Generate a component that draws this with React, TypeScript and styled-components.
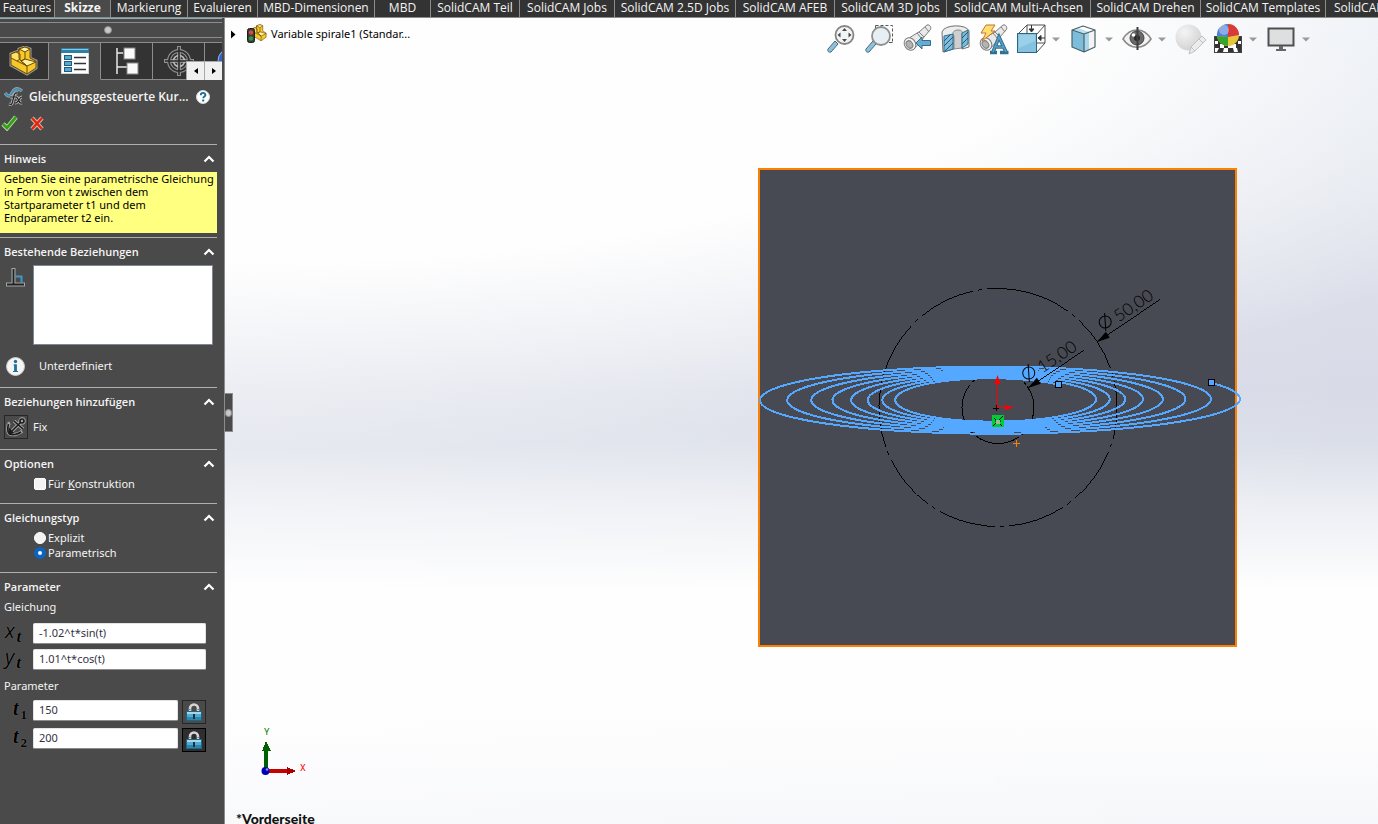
import React, { useState } from "react";
import styled, { createGlobalStyle, css } from "styled-components";

const GlobalStyle = createGlobalStyle`
  * { box-sizing: border-box; }
  body { margin: 0; background: #4a4a4a; }
  button, input, textarea { font: inherit; color: inherit; }
  button { padding: 0; border: 0; background: none; cursor: pointer; }
  fieldset { margin: 0; padding: 0; border: 0; }
  h1, h2, h3, p { margin: 0; }
  svg { display: block; flex: none; }
`;

const Page = styled.div`
  display: flex;
  flex-direction: column;
  height: 100vh;
  overflow: hidden;
  font-family: "Noto Sans", "Open Sans", sans-serif;
  font-size: 11px;
  line-height: 14px;
  color: #f4f4f4;
`;

/* ---------- ribbon ---------- */

const Ribbon = styled.nav`
  display: flex;
  flex: none;
  height: 18px;
  background: #333;
  border-bottom: 1px solid #8c8c8c;
`;

const RibbonTab = styled.button<{ $width: number; $active?: boolean }>`
  display: flex;
  flex: none;
  align-items: flex-start;
  justify-content: center;
  width: ${(p) => p.$width}px;
  border-right: 1px solid #8c8c8c;
  background: ${(p) => (p.$active ? "#4a4a4a" : "#333")};
  font-family: "Open Sans", sans-serif;
  font-size: 12px;
  line-height: 16px;
  font-weight: ${(p) => (p.$active ? 700 : 400)};
  white-space: nowrap;
`;

const tabs: [string, number][] = [
  ["Features", 55],
  ["Skizze", 56],
  ["Markierung", 77],
  ["Evaluieren", 70],
  ["MBD-Dimensionen", 117],
  ["MBD", 56],
  ["SolidCAM Teil", 89],
  ["SolidCAM Jobs", 95],
  ["SolidCAM 2.5D Jobs", 121],
  ["SolidCAM AFEB", 99],
  ["SolidCAM 3D Jobs", 112],
  ["SolidCAM Multi-Achsen", 144],
  ["SolidCAM Drehen", 110],
  ["SolidCAM Templates", 125],
  ["SolidCAM", 70],
];

/* ---------- property manager ---------- */

const Body = styled.div`
  display: flex;
  flex: 1;
  min-height: 0;
`;

const Sidebar = styled.aside`
  flex: none;
  width: 225px;
  background: #4a4a4a;
  border-right: 1px solid #8c8c8c;
`;

const GripBar = styled.div`
  display: flex;
  align-items: center;
  justify-content: center;
  width: 222px;
  height: 20px;
  padding-top: 3px;
  padding-right: 6px;
  border-top: 1px solid #8fb0b0;
  border-bottom: 1px solid #8c8c8c;
  background: linear-gradient(#8c8c8c, #8c8c8c) 0 3px / 100% 1px no-repeat;
`;

const GripDot = styled.span`
  width: 8px;
  height: 8px;
  border-radius: 50%;
  background: #c8c8c8;
  border: 1px solid #8c8c8c;
`;

const PanelTabs = styled.div`
  position: relative;
  display: flex;
  width: 222px;
  height: 38px;
  margin-top: 4px;
  overflow: hidden;
  border-top: 1px solid #8c8c8c;
`;

const PanelTab = styled.button<{ $active?: boolean }>`
  display: flex;
  flex: none;
  align-items: center;
  justify-content: center;
  width: 52px;
  border-right: 1px solid #8c8c8c;
  border-bottom: 1px solid ${(p) => (p.$active ? "#4a4a4a" : "#8c8c8c")};
  background: ${(p) => (p.$active ? "#4a4a4a" : "#333")};
  &:first-child { width: 49px; }
`;

const TabScroller = styled.div`
  position: absolute;
  right: 0;
  bottom: 0;
  display: flex;
  gap: 1px;
  width: 36px;
  height: 19px;
  padding: 1px 0 0 1px;
  background: #a8a8a8;
`;

const ScrollButton = styled.button`
  display: flex;
  flex: 1;
  align-items: center;
  justify-content: center;
  background: #f0f0f0;
`;

const TitleRow = styled.header`
  display: flex;
  align-items: center;
  height: 33px;
  padding: 0 14px 0 4px;
`;

const Title = styled.h1`
  flex: 1;
  min-width: 0;
  padding-left: 4px;
  font-size: 12px;
  line-height: 16px;
  font-weight: 600;
  font-family: "Open Sans", sans-serif;
  white-space: nowrap;
`;

const Confirm = styled.div`
  display: flex;
  align-items: center;
  gap: 10px;
  height: 31px;
  padding: 0 0 12px 1px;
`;

const Section = styled.section<{ $bottom: number }>`
  width: 217px;
  padding-bottom: ${(p) => p.$bottom}px;
  border-top: 1px solid #b0b0b0;
`;

const SectionHeader = styled.button`
  display: flex;
  align-items: center;
  justify-content: space-between;
  width: 100%;
  height: 27px;
  padding: 1px 2px 0 4px;
  text-align: left;
`;

const SectionTitle = styled.h2`
  font-size: 11px;
  line-height: 14px;
  font-weight: 600;
  font-family: "Open Sans", sans-serif;
`;

const Hint = styled.p`
  height: 61px;
  padding-left: 4px;
  background: #ffff80;
  color: #000;
  line-height: 13px;
`;

const RelationsRow = styled.div`
  display: flex;
  gap: 7px;
  padding: 0 4px 0 5px;
`;

const RelationList = styled.textarea`
  flex: 1;
  min-width: 0;
  height: 80px;
  resize: none;
  border: 1px solid #7f8697;
  background: #fff;
  outline: none;
`;

const StatusRow = styled.div`
  display: flex;
  align-items: center;
  gap: 14px;
  height: 22px;
  margin-top: 10px;
  padding-left: 6px;
`;

const FixRow = styled.label`
  display: flex;
  align-items: center;
  gap: 5px;
  padding-left: 4px;
`;

const ToolButton = styled.button<{ $pressed?: boolean }>`
  display: flex;
  flex: none;
  align-items: center;
  justify-content: center;
  width: 24px;
  height: 24px;
  border: 1px solid ${(p) => (p.$pressed ? "#000" : "#262626")};
  background: ${(p) => (p.$pressed ? "#2e2e2e" : "#4a4a4a")};
`;

const Choices = styled.fieldset`
  display: grid;
  gap: 2px;
`;

const ChoiceRow = styled.label`
  display: flex;
  align-items: center;
  gap: 2px;
  height: 13px;
  padding-left: 34px;
`;

const choice = css`
  appearance: none;
  flex: none;
  width: 12px;
  height: 12px;
  margin: 0;
  background: #f3f3f3;
  border: 1px solid #fff;
`;

const Check = styled.input`
  ${choice}
  border-radius: 2px;
  &:checked { background: #0a64c2; }
`;

const Radio = styled.input`
  ${choice}
  border-radius: 50%;
  &:checked { background: #fff; border: 4px solid #0a64c2; }
`;

const GroupLabel = styled.h3`
  height: 14px;
  padding-left: 4px;
  font-size: 11px;
  line-height: 14px;
  font-weight: 400;
`;

const Fields = styled.div<{ $gap: number; $top: number; $bottom: number }>`
  display: grid;
  grid-template-columns: minmax(0, 1fr);
  gap: ${(p) => p.$gap}px;
  padding: ${(p) => p.$top}px 11px ${(p) => p.$bottom}px 0;
`;

const Field = styled.div`
  display: flex;
  align-items: flex-start;
`;

const Symbol = styled.label<{ $serif?: boolean }>`
  flex: none;
  width: 33px;
  height: 20px;
  padding-left: ${(p) => (p.$serif ? 13 : 5)}px;
  font-family: ${(p) => (p.$serif ? '"Liberation Serif", serif' : '"Open Sans", sans-serif')};
  font-size: 20px;
  line-height: 16px;
  font-style: italic;
  font-weight: ${(p) => (p.$serif ? 700 : 500)};
  color: #000;
  white-space: nowrap;
  text-shadow: 0 0 1px #8a8a8a;
  sub {
    padding-left: 2px;
    font: ${(p) => (p.$serif ? "normal 700 13px" : "italic 700 17px")} / 12px "Liberation Serif", serif;
    vertical-align: -4px;
  }
`;

const TextBox = styled.input`
  flex: 1;
  min-width: 0;
  height: 21px;
  padding: 0 5px 2px;
  border: 1px solid #e4e4e4;
  border-bottom-color: #8c8c8c;
  border-radius: 2px;
  background: #fff;
  color: #33333f;
  outline: none;
`;

const LockSlot = styled.div`
  flex: none;
  padding-left: 4px;
`;

/* ---------- graphics area ---------- */

const Viewport = styled.main`
  position: relative;
  flex: 1;
  min-width: 0;
  overflow: hidden;
  color: #000;
  background:
    radial-gradient(ellipse 130% 54% at 0 0, #fefefe 56%, rgba(254, 254, 254, 0.55) 75%, rgba(254, 254, 254, 0) 100%),
    linear-gradient(90deg, rgba(255, 255, 255, 0.3), rgba(255, 255, 255, 0)),
    linear-gradient(#e2e8f1 0%, #dfe3ec 22%, #d8dbe7 46%, #dbdfe9 53%, #edeff4 61%, #fefefe 71%, #fefefe 86%, #f6f7fa 100%);
`;

const SplitHandle = styled.button`
  position: absolute;
  left: 0;
  top: 375px;
  z-index: 2;
  display: flex;
  align-items: center;
  width: 8px;
  height: 39px;
  background: #4a4a4a;
  border: 1px solid #8c8c8c;
  border-left: 0;
`;

const ViewportHeader = styled.div`
  position: relative;
  z-index: 1;
  display: flex;
  align-items: flex-start;
  justify-content: space-between;
  padding: 6px 68px 0 6px;
`;

const TreeItem = styled.button`
  display: flex;
  align-items: center;
  height: 20px;
  font-size: 11px;
  white-space: nowrap;
  span { padding-left: 4px; }
`;

const TreeGlyph = styled.i`
  padding-left: 11px;
`;

const ViewTools = styled.div`
  display: flex;
  gap: 10px;
`;

const ToolGroup = styled.div`
  display: flex;
  align-items: center;
  gap: 7px;
`;

const IconButton = styled.button`
  width: 28px;
  height: 30px;
`;

const Scene = styled.svg`
  position: absolute;
  left: 0;
  top: 0;
`;

/* ---------- icons ---------- */

const Chevron = () => (
  <svg width="12" height="8" viewBox="0 0 12 8">
    <path d="M1.500 6.500 6 2l4.500 4.500" fill="none" stroke="#fff" strokeWidth="2.200" />
  </svg>
);

const PartShape = () => (
  <g stroke="#6b4a00" strokeWidth="1" strokeLinejoin="round">
    <path d="M2 8 10 5V3l6-2 5 2v9l6 3v7l-9 6L2 19Z" fill="#f7c82c" />
    <path d="m10 3 6-2 5 2-5 3Z" fill="#fff0a0" />
    <path d="m2 8 5-2 4 2v5l-3 2-6-3Z" fill="#ffe16a" />
    <path d="m12 15 4-2 11 3-9 4Z" fill="#fff0a0" />
    <path d="M10 3v9l2 3 6 5v8M16 6v7l-4 2M18 20 8 15" fill="none" />
  </g>
);

const PartIcon = () => (
  <svg width="30" height="30" viewBox="0 0 30 30">
    <path d="M2 8 10 5V3l6-2 5 2v9l6 3v7l-9 6L2 19Z" fill="none" stroke="#9a9a9a" strokeWidth="3" />
    <PartShape />
  </svg>
);

const PropertyIcon = () => (
  <svg width="28" height="28" viewBox="0 0 28 28">
    <rect x="0.500" y="1.500" width="27" height="25" fill="#fff" stroke="#cfd6da" />
    <path d="M0 1h28v5H0Z" fill="#2e7fa6" />
    <path d="M1 2h26v1H1Z" fill="#8cc6e0" />
    <g fill="#5aa8cc" stroke="#1d5c7d">
      <rect x="3.500" y="8.500" width="7" height="4" />
      <rect x="3.500" y="14.500" width="7" height="4" />
      <rect x="3.500" y="20.500" width="7" height="4" />
    </g>
    <path d="M13 10.500h12M13 16.500h12M13 22.500h12" stroke="#333" strokeWidth="1.400" />
  </svg>
);

const ConfigIcon = () => (
  <svg width="24" height="28" viewBox="0 0 24 28">
    <path d="M2 1v26M2 6h6M2 20h10" stroke="#e8e8e8" strokeWidth="1.500" fill="none" />
    <rect x="9" y="1" width="11" height="11" fill="#fafafa" stroke="#888" />
    <rect x="12" y="16" width="11" height="11" fill="#fafafa" stroke="#888" />
  </svg>
);

const TargetIcon = () => (
  <svg width="30" height="30" viewBox="0 0 30 30" fill="none">
    <g stroke="#8f8f8f" strokeWidth="4">
      <circle cx="15" cy="15" r="10" />
      <path d="M15 0v30M0 15h30" />
    </g>
    <g stroke="#2b2b2b" strokeWidth="1.600">
      <circle cx="15" cy="15" r="10" />
      <circle cx="15" cy="15" r="5.500" stroke="#bbb" />
      <path d="M15 1v28M1 15h28" />
    </g>
  </svg>
);

const BallIcon = () => (
  <svg width="28" height="28" viewBox="0 0 28 28">
    <circle cx="14" cy="14" r="13" fill="#2f62c4" stroke="#9ab4e6" />
  </svg>
);

const CurveIcon = () => (
  <svg width="21" height="20" viewBox="0 0 21 20">
    <path d="M1 6c3 4 5 4 7 0s5-6 10-2" fill="none" stroke="#9aa3a8" strokeWidth="3.500" />
    <path d="M1 6c3 4 5 4 7 0s5-6 10-2" fill="none" stroke="#3c8fb8" strokeWidth="1.800" />
    <path d="M14 6c-4-1-4 3-5 7s-1 5-4 4M6 10h7M12 10c3 0 2 7 6 6M18 10c-3 0-3 6-7 6" fill="none" stroke="#b5b5b5" strokeWidth="3" />
    <path d="M14 6c-4-1-4 3-5 7s-1 5-4 4M6 10h7M12 10c3 0 2 7 6 6M18 10c-3 0-3 6-7 6" fill="none" stroke="#222" strokeWidth="1.200" />
  </svg>
);

const HelpIcon = () => (
  <svg width="14" height="14" viewBox="0 0 14 14">
    <circle cx="7" cy="7" r="6.500" fill="#fff" stroke="#cfd8dc" />
    <path d="M4.800 5.200c0-3 4.600-3 4.600-.3 0 1.600-2.200 1.600-2.200 3.400" fill="none" stroke="#1d6b90" strokeWidth="1.900" />
    <rect x="6.200" y="9.500" width="2" height="2" fill="#1d6b90" />
  </svg>
);

const OkIcon = () => (
  <svg width="18" height="16" viewBox="0 0 18 16">
    <path d="m2 9 4 4L15 2" fill="none" stroke="#b9d8ae" strokeWidth="4.600" />
    <path d="m2 9 4 4L15 2" fill="none" stroke="#35a012" strokeWidth="2.800" />
  </svg>
);

const CancelIcon = () => (
  <svg width="16" height="16" viewBox="0 0 16 16">
    <path d="m3 3 10 11M13 3 3 14" stroke="#d9b5ac" strokeWidth="4.400" />
    <path d="m3 3 10 11M13 3 3 14" stroke="#e02810" strokeWidth="2.600" />
  </svg>
);

const PerpIcon = () => (
  <svg width="21" height="22" viewBox="0 0 21 22">
    <path d="M8.500 3v15M1 19.500h19" stroke="#a6a6a6" strokeWidth="4" />
    <path d="M10 11.500h6.500V18" fill="none" stroke="#3f98c4" strokeWidth="2" />
    <path d="M8.500 4v15M2 19.500h17" stroke="#222" strokeWidth="1.800" />
  </svg>
);

const InfoIcon = () => (
  <svg width="19" height="19" viewBox="0 0 19 19">
    <circle cx="9.500" cy="9.500" r="9" fill="#f5f5f5" stroke="#c9c9c9" />
    <path d="M9.500 7.500V15" fill="none" stroke="#1f7098" strokeWidth="2.800" />
    <path d="M7.500 8h3M7 14.500h5" fill="none" stroke="#1f7098" />
    <circle cx="9.500" cy="4.500" r="1.700" fill="#1f7098" />
  </svg>
);

const AnchorIcon = () => (
  <svg width="20" height="20" viewBox="0 0 20 20" fill="none">
    <g stroke="#a5a5a5" strokeWidth="3.400">
      <circle cx="16" cy="4" r="2" />
      <path d="M14.500 5.500 5 15M8 4l9 8M2.500 7C1 13 2 16 4 17s7 1 11-2M2 7l2-1M15 15l1-1" />
    </g>
    <g stroke="#1c1c1c" strokeWidth="1.600">
      <circle cx="16" cy="4" r="2" />
      <path d="M14.500 5.500 5 15M8 4l9 8M2.500 7C1 13 2 16 4 17s7 1 11-2" />
    </g>
    <path d="M2.500 10 8 16l-5 2Z" fill="#1c1c1c" />
  </svg>
);

const LockIcon = () => (
  <svg width="18" height="20" viewBox="0 0 18 20">
    <path d="M5 10V6.500a4 4 0 0 1 8 0V10" fill="none" stroke="#d5d5d5" strokeWidth="2.600" />
    <path d="M4 7.500h1.500M12.500 7.500H14" stroke="#777" />
    <rect x="1.500" y="9.500" width="15" height="9" fill="#56a9cd" stroke="#1d6587" />
    <path d="M2 10h14v2H2Z" fill="#a5d7ea" />
    <path d="M2 15h14v3H2Z" fill="#2c86ae" />
    <rect x="8" y="12" width="2" height="5" fill="#0d3447" />
  </svg>
);

const ExpandIcon = () => (
  <svg width="5" height="9" viewBox="0 0 5 9">
    <path d="M0 0.500 4.500 4.500 0 8.500Z" fill="#000" />
  </svg>
);

const TreePartIcon = () => (
  <svg width="20" height="20" viewBox="0 0 20 20">
    <g transform="translate(4 0) scale(.56 .6)">
      <PartShape />
    </g>
    <rect x="0.500" y="4.500" width="7" height="14" rx="2" fill="#3a3a3a" stroke="#1c1c1c" />
    <circle cx="4" cy="8.500" r="2.200" fill="#e04848" />
    <circle cx="4" cy="14.500" r="2.200" fill="#2c9c3c" />
  </svg>
);

const DropArrow = () => (
  <svg width="8" height="5" viewBox="0 0 8 5">
    <path d="M0 0.500h8l-4 4Z" fill="#9a9a9e" />
  </svg>
);

const Handle = () => (
  <path d="m1 25 7-8 3 3-7 8c-2 1-4-1-3-3Z" fill="#8fc1dc" stroke="#43687c" />
);

const Tube = () => (
  <g stroke="#7d7d7d" strokeLinejoin="round">
    <path d="M3 16 14 9l2-1 8-7c3-1 5 3 3 5l-6 7-2 3-9 10Z" fill="#e9e9e9" />
    <path d="m14 9 5 6M16 8l5 5M22 3l4 5" fill="none" />
    <ellipse cx="7" cy="20" rx="5.500" ry="6.500" transform="rotate(-35 7 20)" fill="#f4f4f4" />
    <ellipse cx="6.500" cy="20.500" rx="3" ry="4" transform="rotate(-35 6.500 20.500)" fill="#b4b4b4" />
  </g>
);

const art: Record<string, React.ReactNode> = {
  fit: (
    <>
      <Handle />
      <circle cx="17.500" cy="11" r="9" fill="#f2f5f6" stroke="#858585" strokeWidth="1.800" />
      <path d="m17.500 4 2.500 3h-5ZM17.500 18l2.500-3h-5ZM10.500 11l3-2.500v5ZM24.500 11l-3-2.500v5Z" fill="#4a4a4a" />
    </>
  ),
  area: (
    <>
      <path d="M10.500 1.500h17v17" fill="none" stroke="#555" strokeDasharray="3 2" />
      <path d="M10.500 1.500V5M27.500 18.500H24" stroke="#555" />
      <Handle />
      <circle cx="16" cy="12" r="9" fill="#e6eff3" stroke="#909090" strokeWidth="1.800" />
    </>
  ),
  previous: (
    <>
      <Tube />
      <path d="m13 19 6-6v3.500h8.500v5H19V25Z" fill="#68add0" stroke="#2f6f92" />
    </>
  ),
  section: (
    <>
      <path d="M1 8C3 0 26 0 28 7v16l-7 2V12h-8v13L2 28Z" fill="#ededed" stroke="#707070" />
      <path d="M13 12c-3-4 1-6 4-6s5 1 4 4v14l-8 1Z" fill="#cfcfcf" stroke="#8a8a8a" />
      <path d="m3 12 9-2v15l-9 3ZM21 9l6-3v14l-6 4Z" fill="#7fbcdb" stroke="#2f6f92" />
      <path d="m3 17 6-6M3 22l9-9M4 27l8-8M21 14l6-6M21 20l6-6" stroke="#25566f" />
    </>
  ),
  annotate: (
    <>
      <Tube />
      <path d="M7 1h9l-4 6h4L3 17l4-8H2Z" fill="#ffdf70" stroke="#c5722a" />
      <path d="M11 28.500h7M21 28.500h8.500M14 28l6-15 7 15M17 23h8" fill="none" stroke="#2f6f92" strokeWidth="3.600" />
      <path d="M14 28l6-15 7 15M17 23h8" fill="none" stroke="#5a9fc4" strokeWidth="1.600" />
    </>
  ),
  orient: (
    <>
      <path d="m1 10 9-9h18v18l-8 9M28 1l-8 9M10 1v9M20 19h8" fill="none" stroke="#4f4f4f" />
      <path d="M14.500 1v6M12 5l2.500 3L17 5ZM28 14h-6M24 11.500 21 14l3 2.500Z" stroke="#333" fill="#333" />
      <rect x="0.500" y="9.500" width="19" height="19" fill="#84c2e0" stroke="#2c6684" />
      <path d="M2 11h16v6L2 24Z" fill="#a9d8ec" opacity=".6" />
    </>
  ),
  display: (
    <>
      <path d="m2 6 11-4 12 4v17l-11 5-12-5Z" fill="#fff" />
      <path d="m2 6 12 4v18L2 23Z" fill="#7dbddc" />
      <path d="m14 10 5-2v18l-5 2Z" fill="#a9d6ea" />
      <path d="m19 8 6-2v17l-6 3Z" fill="#f4f4f4" />
      <path d="m2 6 6-2 11 4-5 2Z" fill="#b8e0f0" />
      <path d="m2 6 11-4 12 4v17l-11 5-12-5ZM2 6l12 4 11-4M14 10v18" fill="none" stroke="#4d5f68" strokeWidth="1.200" strokeLinejoin="round" />
    </>
  ),
  hide: (
    <>
      <path d="M0 15C7 3 21 3 28 15 21 26 7 26 0 15Z" fill="#f3f3f3" stroke="#8a8a8a" strokeWidth="1.600" />
      <circle cx="14" cy="14" r="7" fill="#6a6a6a" stroke="#444" />
      <circle cx="14" cy="14" r="3" fill="#262626" />
      <circle cx="10.500" cy="11" r="1.800" fill="#fff" />
      <path d="M14.500 3v23" stroke="#3f3f3f" strokeWidth="2" />
    </>
  ),
  appearance: (
    <>
      <circle cx="12.500" cy="13.500" r="13" fill="url(#paleBall)" />
      <path d="m13 30 2-7L26 12l4 4-11 11Z" fill="#ececec" stroke="#c2c2c2" />
      <path d="m15 23 4 4M23 15l4 4" stroke="#c2c2c2" />
    </>
  ),
  scene: (
    <>
      <rect x="0.500" y="12.500" width="27" height="16" fill="#fff" stroke="#444" />
      <path d="M1 13h4v4H1ZM23 13h4v4h-4ZM4 17h4v3H4ZM20 17h4v3h-4ZM1 20h5v4H1ZM22 20h5v4h-5ZM10 20h4v4h-4ZM5 24h5l-1 4H3ZM14 24h5l1 4h-6ZM23 24h4v4h-3Z" fill="#333" />
      <circle cx="14" cy="11" r="11" fill="#eac53b" />
      <path d="M14 0A11 11 0 0 0 3 12l11 1Z" fill="#4f7fda" />
      <path d="M14 0a11 11 0 0 1 11 11l-11 2Z" fill="#d83a3a" />
      <path d="M3 12a11 11 0 0 0 11 10v-9Z" fill="#35a52e" />
      <circle cx="10" cy="6" r="5" fill="#fff" opacity=".35" />
    </>
  ),
  monitor: (
    <>
      <path d="M1.500 4.500h25v17h-25Z" fill="#dedfdf" stroke="#505050" strokeWidth="2" />
      <path d="M12 22h4v3h3v2H9v-2h3Z" fill="#666" />
    </>
  ),
};

const viewTools: { id: string; label: string; menu?: boolean }[] = [
  { id: "fit", label: "In Fenster zoomen" },
  { id: "area", label: "Ausschnitt vergrößern" },
  { id: "previous", label: "Vorherige Ansicht" },
  { id: "section", label: "Schnittansicht" },
  { id: "annotate", label: "Dynamische Beschriftungsansichten" },
  { id: "orient", label: "Ansichtsausrichtung", menu: true },
  { id: "display", label: "Anzeigeart", menu: true },
  { id: "hide", label: "Elemente ausblenden", menu: true },
  { id: "appearance", label: "Erscheinungsbild bearbeiten" },
  { id: "scene", label: "Bühne übernehmen", menu: true },
  { id: "monitor", label: "Ansichtseinstellungen", menu: true },
];

/* ---------- model ---------- */

const SCALE = 4.76;
const ORIGIN = { x: 992.5, y: 399.6 };

function spiralPath(from: number, to: number) {
  const points: string[] = [];
  for (let t = from; t <= to + 0.001; t += 0.05) {
    const x = ORIGIN.x - SCALE * Math.pow(1.02, t) * Math.sin(t);
    const y = ORIGIN.y - SCALE * Math.pow(1.01, t) * Math.cos(t);
    points.push(`${x.toFixed(2)} ${y.toFixed(2)}`);
  }
  return "M" + points.join("L");
}

interface DimensionProps {
  x: number;
  y: number;
  text: string;
  inset: number;
  tail: number;
}

const Dimension = ({ x, y, text, inset, tail }: DimensionProps) => (
  <g transform={`translate(${x} ${y}) rotate(-34)`}>
    <path d={`M0 0H${tail}`} stroke="#000" shapeRendering="crispEdges" />
    <path d="M0 0 13-3.500v7Z" fill="#000" />
    <g transform={`translate(${inset} -12) rotate(30)`} fill="none" stroke="#000">
      <circle r="6" />
      <path d="M0-9V9" />
    </g>
    <text x={inset + 11} y="-4" fontFamily="Lato, sans-serif" fontWeight="300" fontSize="17" fill="#000">
      {text}
    </text>
  </g>
);

const Model = ({ from, to }: { from: number; to: number }) => (
  <Scene width="1153" height="806" viewBox="225 18 1153 806">
    <defs>
      <radialGradient id="paleBall" cx="0.350" cy="0.300" r="0.800">
        <stop offset="0" stopColor="#f4f4f4" />
        <stop offset="1" stopColor="#cfcfcf" />
      </radialGradient>
    </defs>
    <rect x="759" y="169" width="477" height="477" fill="#484a53" stroke="#ff8000" strokeWidth="2" shapeRendering="crispEdges" />
    <g fill="none" stroke="#000" shapeRendering="crispEdges">
      <circle cx="998" cy="407.500" r="119" strokeDasharray="58 5 4 5" transform="rotate(-82 998 407.500)" />
      <circle cx="998" cy="407.500" r="36" strokeDasharray="46 4 3 4" transform="rotate(-36 998 407.500)" />
    </g>
    <path d={spiralPath(from, to)} fill="none" stroke="#55a8ff" strokeWidth="2" shapeRendering="crispEdges" />
    <Dimension x={1097} y={342} text="50,00" inset={18} tail={76} />
    <Dimension x={1028} y={388} text="15,00" inset={9} tail={67} />
    <g fill="#55a8ff" stroke="#000" shapeRendering="crispEdges">
      <rect x="1055.500" y="381.500" width="6" height="6" />
      <rect x="1208.500" y="379.500" width="6" height="6" />
    </g>
    <path d="M993 408.500h6M996.500 405v6" stroke="#000" />
    <path d="M997.500 408V382M998 407.500h10" stroke="#f00" />
    <path d="m997.500 375 3 9h-6ZM1014 407.500l-9-2.500v5Z" fill="#f00" />
    <rect x="992" y="415" width="12" height="12" fill="#00cc33" />
    <path d="m993 426 10-10M994 418l8 8M995 421h6" stroke="#000" />
    <rect x="996" y="420" width="4" height="4" fill="#9fb5a5" />
    <path d="M1013 443.500h7M1016.500 440v7" stroke="#ff8000" />
    <g shapeRendering="crispEdges">
      <path d="M264 750h4v20h-4Z" fill="#006000" />
      <path d="m266 741 5 10h-9Z" fill="#006000" />
      <path d="M266 769h22v4h-22Z" fill="#c80000" />
      <path d="m296 771-9-4v8Z" fill="#a80000" />
    </g>
    <circle cx="265.500" cy="771" r="4" fill="#0000b4" />
    <circle cx="267" cy="769.500" r="1.300" fill="#8a8aff" />
    <g fontFamily="Roboto, sans-serif" fontSize="9">
      <text x="264" y="735" fill="#008000">Y</text>
      <text x="300" y="771" fill="#f00">X</text>
    </g>
    <text x="236" y="824" fontFamily="Lato, sans-serif" fontSize="14" fontWeight="900" fill="#111">
      *Vorderseite
    </text>
  </Scene>
);

const Group = ({ title, bottom, children }: { title: string; bottom: number; children: React.ReactNode }) => {
  const [open, setOpen] = useState(true);
  return (
    <Section $bottom={open ? bottom : 0}>
      <SectionHeader aria-expanded={open} onClick={() => setOpen(!open)}>
        <SectionTitle>{title}</SectionTitle>
        <Chevron />
      </SectionHeader>
      {open && children}
    </Section>
  );
};

export default function App() {
  const [active, setActive] = useState("Skizze");
  return (
    <Page>
      <GlobalStyle />
      <Ribbon>
        {tabs.map(([label, width]) => (
          <RibbonTab key={label} $width={width} $active={label === active} onClick={() => setActive(label)}>
            {label}
          </RibbonTab>
        ))}
      </Ribbon>
      <Body>
        <Sidebar>
          <GripBar>
            <GripDot />
          </GripBar>
          <PanelTabs>
            <PanelTab aria-label="FeatureManager"><PartIcon /></PanelTab>
            <PanelTab aria-label="PropertyManager" $active><PropertyIcon /></PanelTab>
            <PanelTab aria-label="ConfigurationManager"><ConfigIcon /></PanelTab>
            <PanelTab aria-label="DimXpertManager"><TargetIcon /></PanelTab>
            <PanelTab aria-label="DisplayManager"><BallIcon /></PanelTab>
            <TabScroller>
              <ScrollButton aria-label="Zurück">
                <svg width="4" height="6" viewBox="0 0 4 6"><path d="M4 0v6L0 3Z" /></svg>
              </ScrollButton>
              <ScrollButton aria-label="Weiter">
                <svg width="4" height="6" viewBox="0 0 4 6"><path d="M0 0v6l4-3Z" /></svg>
              </ScrollButton>
            </TabScroller>
          </PanelTabs>
          <TitleRow>
            <CurveIcon />
            <Title>Gleichungsgesteuerte Kur...</Title>
            <button aria-label="Hilfe"><HelpIcon /></button>
          </TitleRow>
          <Confirm>
            <button aria-label="OK"><OkIcon /></button>
            <button aria-label="Abbrechen"><CancelIcon /></button>
          </Confirm>

          <Group title="Hinweis" bottom={4}>
            <Hint>
              Geben Sie eine parametrische Gleichung in Form von t zwischen dem
              <br />
              Startparameter t1 und dem Endparameter t2 ein.
            </Hint>
          </Group>

          <Group title="Bestehende Beziehungen" bottom={10}>
            <RelationsRow>
              <PerpIcon />
              <RelationList readOnly aria-label="Bestehende Beziehungen" />
            </RelationsRow>
            <StatusRow>
              <InfoIcon />
              <span>Unterdefiniert</span>
            </StatusRow>
          </Group>

          <Group title="Beziehungen hinzufügen" bottom={10}>
            <FixRow>
              <ToolButton><AnchorIcon /></ToolButton>
              Fix
            </FixRow>
          </Group>

          <Group title="Optionen" bottom={13}>
            <ChoiceRow>
              <Check type="checkbox" />
              <span>Für <u>K</u>onstruktion</span>
            </ChoiceRow>
          </Group>

          <Group title="Gleichungstyp" bottom={13}>
            <Choices>
              <ChoiceRow>
                <Radio type="radio" name="typ" />
                Explizit
              </ChoiceRow>
              <ChoiceRow>
                <Radio type="radio" name="typ" defaultChecked />
                Parametrisch
              </ChoiceRow>
            </Choices>
          </Group>

          <Group title="Parameter" bottom={0}>
            <GroupLabel>Gleichung</GroupLabel>
            <Fields $gap={5} $top={9} $bottom={9}>
              <Field>
                <Symbol htmlFor="xt">x<sub>t</sub></Symbol>
                <TextBox id="xt" defaultValue="-1.02^t*sin(t)" />
              </Field>
              <Field>
                <Symbol htmlFor="yt">y<sub>t</sub></Symbol>
                <TextBox id="yt" defaultValue="1.01^t*cos(t)" />
              </Field>
            </Fields>
            <GroupLabel>Parameter</GroupLabel>
            <Fields $gap={4} $top={7} $bottom={0}>
              <Field>
                <Symbol htmlFor="t1" $serif>t<sub>1</sub></Symbol>
                <TextBox id="t1" defaultValue="150" />
                <LockSlot><ToolButton aria-label="t1 sperren"><LockIcon /></ToolButton></LockSlot>
              </Field>
              <Field>
                <Symbol htmlFor="t2" $serif>t<sub>2</sub></Symbol>
                <TextBox id="t2" defaultValue="200" />
                <LockSlot><ToolButton aria-label="t2 sperren" $pressed><LockIcon /></ToolButton></LockSlot>
              </Field>
            </Fields>
          </Group>
        </Sidebar>

        <Viewport>
          <Model from={150} to={200} />
          <SplitHandle aria-label="Bereich ausblenden"><GripDot /></SplitHandle>
          <ViewportHeader>
            <TreeItem>
              <ExpandIcon />
              <TreeGlyph><TreePartIcon /></TreeGlyph>
              <span>Variable spirale1 (Standar...</span>
            </TreeItem>
            <ViewTools>
              {viewTools.map((tool) => (
                <ToolGroup key={tool.id}>
                  <IconButton aria-label={tool.label}>
                    <svg width="28" height="30" viewBox="0 0 28 30" overflow="visible">{art[tool.id]}</svg>
                  </IconButton>
                  {tool.menu && <button aria-label={`${tool.label} Menü`}><DropArrow /></button>}
                </ToolGroup>
              ))}
            </ViewTools>
          </ViewportHeader>
        </Viewport>
      </Body>
    </Page>
  );
}
